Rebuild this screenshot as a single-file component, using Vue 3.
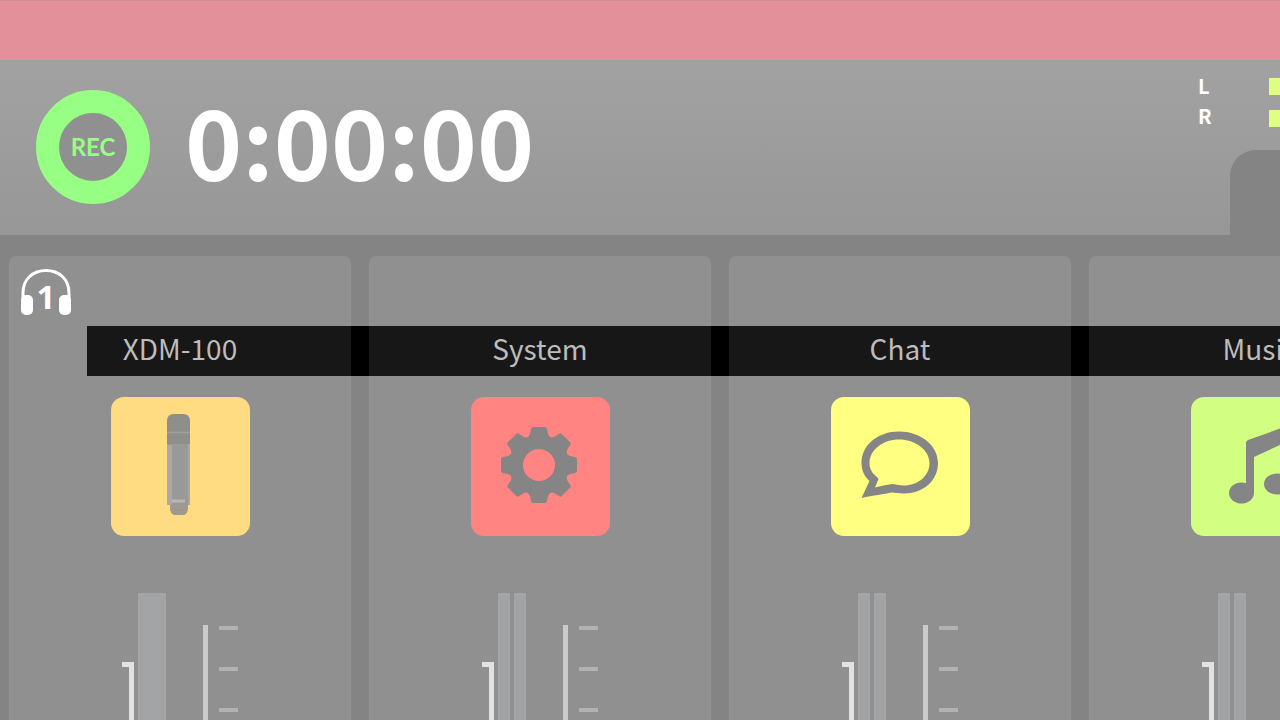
<script setup>
const channels = [
  { name: 'XDM-100', icon: 'mic', color: '#ffdc82', bars: ['wide'], monitor: true },
  { name: 'System', icon: 'gear', color: '#ff8482', bars: ['thin', 'thin'] },
  { name: 'Chat', icon: 'chat', color: '#ffff82', bars: ['thin', 'thin'] },
  { name: 'Music', icon: 'music', color: '#d2ff82', bars: ['thin', 'thin'] }
]
const teeth = [0, 45, 90, 135, 180, 225, 270, 315]
</script>

<template>
  <div class="mixer">
    <div class="titlebar"></div>
    <header class="transport">
      <button class="rec" type="button">REC</button>
      <div class="timer">0:00:00</div>
      <div class="output">
        <div class="levels">
          <div class="sides"><span>L</span><span>R</span></div>
          <div class="lamps"><i></i><i></i></div>
        </div>
        <div class="tab"></div>
      </div>
    </header>

    <main class="channels">
      <section v-for="c in channels" :key="c.name" class="channel">
        <div class="monitor">
          <button v-if="c.monitor" class="phones" type="button" aria-label="Headphones 1">
            <svg viewBox="0 0 52 48" width="52" height="48" aria-hidden="true">
              <path d="M3 30V25C3 11 13 2.500 26 2.500S49 11 49 25V30" fill="none" stroke="#fff" stroke-width="3" />
              <rect x="1" y="27" width="12" height="20" rx="5" fill="#fff" />
              <rect x="39" y="27" width="12" height="20" rx="5" fill="#fff" />
            </svg>
            <span>1</span>
          </button>
        </div>
        <h2 class="name" :class="{ first: c.monitor }">{{ c.name }}</h2>
        <button class="tile" type="button" :aria-label="c.name" :style="{ background: c.color }">
          <svg viewBox="0 0 139 139" aria-hidden="true">
            <g v-if="c.icon === 'mic'">
              <path d="M56 47V24Q56 17 63 17H72Q79 17 79 24V47Z" fill="#8e8e8b" />
              <path d="M56 35.500H79" stroke="#a09f99" stroke-width="1.500" />
              <rect x="56" y="47" width="23" height="61" rx="1" fill="#999" />
              <rect x="56" y="48" width="5" height="60" fill="#aaa9a7" />
              <path d="M78 47V108" stroke="#aaa79f" stroke-width="2" />
              <path d="M61 104H74" stroke="#b9b7b3" stroke-width="3" />
              <path d="M59 108H77V112Q76 118 72 118H64Q60 118 59 112Z" fill="#a09992" />
              <path d="M64 113H72" stroke="#a88580" stroke-width="1" />
            </g>
            <g v-else-if="c.icon === 'gear'" transform="translate(68 68)">
              <circle r="22" fill="none" stroke="#858585" stroke-width="12" />
              <path
                v-for="a in teeth" :key="a" :transform="`rotate(${a})`" fill="#858585"
                d="M-6 -38H6Q7.500 -38 8 -36L9 -31Q10 -28 14 -26L8 -20H-8L-14 -26Q-10 -28 -9 -31L-8 -36Q-7.500 -38 -6 -38Z"
              />
            </g>
            <path
              v-else-if="c.icon === 'chat'" fill="#858585" fill-rule="evenodd"
              d="M30.500 101L38.500 84C33 79 30.500 73 30.500 66C30.500 48 47 34.500 68 34.500S107 48 107 66C107 84 92 96.500 73 96.500C68 96.500 64 95.500 61 95.500C53 97 42 98.500 30.500 101ZM44 90.500L47.500 82L46 80C41 76 38.500 72 38.500 66C38.500 53 52 42.500 68 42.500S98.500 53 98.500 66C98.500 79 87 88.500 73 88.500C68 88.500 64 87 61 87C55 88 50 89 44 90.500Z"
            />
            <g v-else fill="#858585">
              <path d="M55 46Q55 44 57 43L96 29Q99 28 99 31V87H91V47L63 60V96H55Z" />
              <ellipse cx="50.500" cy="96" rx="12.500" ry="10.500" />
              <ellipse cx="86" cy="87" rx="13" ry="10.500" />
            </g>
          </svg>
        </button>
        <div class="meter">
          <div class="bracket"></div>
          <div class="bars"><i v-for="(b, i) in c.bars" :key="i" :class="b"></i></div>
          <div class="rail"></div>
          <div class="ticks"><i v-for="n in 8" :key="n"></i></div>
        </div>
      </section>
    </main>
  </div>
</template>

<style>
body { background: #848484; }
</style>

<style scoped>
.mixer {
  height: 100vh;
  overflow: hidden;
  display: flex;
  flex-direction: column;
  background: #848484;
  color: #fff;
  font-family: "Noto Sans CJK JP", "Noto Sans", sans-serif;
}
button { border: 0; padding: 0; background: none; color: inherit; }
.titlebar {
  flex: none;
  height: 60px;
  box-sizing: border-box;
  border-top: 1px solid #c98e98;
  background: #e4909b;
}
.transport {
  flex: none;
  height: 175px;
  display: flex;
  align-items: center;
  padding-left: 36px;
  background: linear-gradient(#a2a2a2, #979797);
}
.rec {
  flex: none;
  width: 114px;
  height: 114px;
  margin-bottom: 2px;
  border: 23px solid #96ff84;
  border-radius: 50%;
  background: #909090;
  color: #96ff84;
  font: 700 24px/66px Lato, sans-serif;
}
.timer {
  margin-left: 35px;
  padding-bottom: 18px;
  font-size: 97px;
  line-height: 98px;
  font-weight: 700;
  white-space: nowrap;
}
.output {
  align-self: stretch;
  margin-left: auto;
  width: 82px;
  flex: none;
  display: flex;
  flex-direction: column;
  justify-content: space-between;
  align-items: flex-end;
}
.levels {
  width: 100%;
  display: flex;
  justify-content: space-between;
}
.sides {
  display: flex;
  flex-direction: column;
  padding-top: 11px;
  font-size: 20px;
  font-weight: 700;
  line-height: 30px;
}
.lamps {
  width: 11px;
  display: flex;
  flex-direction: column;
  gap: 15px;
  padding-top: 18px;
}
.lamps i { height: 17px; background: #deff80; }
.tab {
  width: 50px;
  height: 85px;
  border-top-left-radius: 26px;
  background: #848484;
}
.channels {
  flex: 1;
  min-height: 0;
  display: grid;
  grid-template-columns: repeat(4, 342px);
  gap: 18px;
  padding: 21px 0 0 9px;
}
.channel {
  display: flex;
  flex-direction: column;
  border-radius: 7px 7px 0 0;
  background: #909090;
}
.monitor { height: 70px; padding: 12px 11px 0; box-sizing: border-box; }
.phones { position: relative; display: block; width: 52px; height: 48px; }
.phones svg { display: block; }
.phones span {
  position: absolute;
  inset: 12px 0 0;
  text-align: center;
  font: 700 33px/34px "Open Sans", sans-serif;
}
.name {
  position: relative;
  flex: none;
  box-sizing: border-box;
  height: 50px;
  margin: 0;
  background: #171717;
  color: #bcbcbc;
  font-size: 28px;
  line-height: 44px;
  font-weight: 400;
  text-align: center;
}
.name.first { margin-left: 78px; padding-right: 78px; }
.name::after {
  content: "";
  position: absolute;
  left: 100%;
  top: 0;
  width: 18px;
  height: 100%;
  background: #000;
}
.tile {
  flex: none;
  align-self: center;
  width: 139px;
  height: 139px;
  margin-top: 21px;
  border-radius: 13px;
}
.tile svg { display: block; width: 100%; height: 100%; }
.meter {
  flex: none;
  display: flex;
  align-items: flex-start;
  margin-top: 57px;
  padding-left: 113px;
}
.bracket {
  width: 12px;
  height: 260px;
  margin-top: 69px;
  box-sizing: border-box;
  border-top: 5px solid #e2e2e2;
  border-right: 5px solid #e2e2e2;
}
.bars { display: flex; gap: 4px; margin-left: 4px; width: 28px; height: 330px; }
.bars i { background: #a2a4a6; }
.wide { width: 28px; }
.thin { width: 12px; }
.rail { width: 5px; height: 300px; margin: 32px 0 0 37px; background: #cbcbcb; }
.ticks { display: flex; flex-direction: column; gap: 37px; margin: 33px 0 0 11px; }
.ticks i { width: 19px; height: 4px; background: #b2b2b2; }
</style>
